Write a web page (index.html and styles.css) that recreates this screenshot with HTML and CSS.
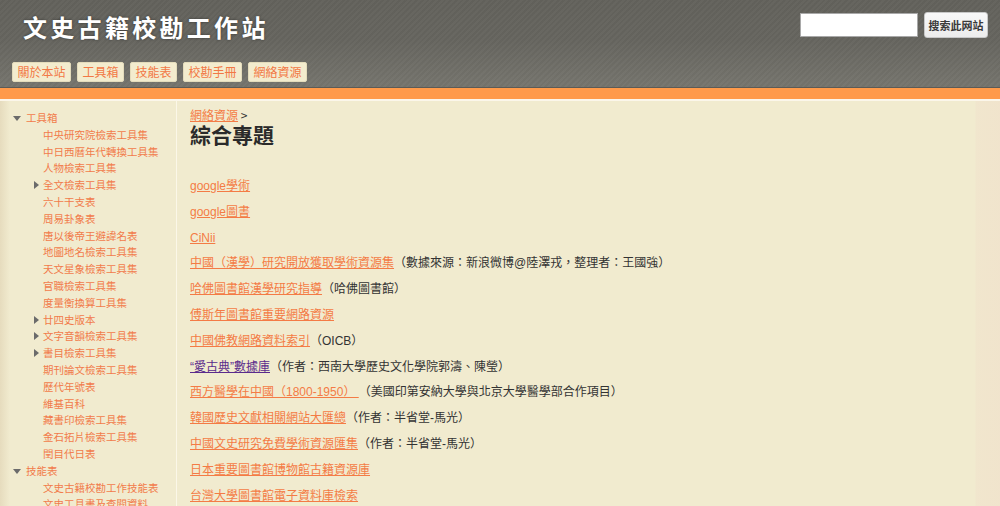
FILE: index.html
```html
<!DOCTYPE html>
<html lang="zh-Hant">
<head>
<meta charset="utf-8">
<title>綜合專題 - 文史古籍校勘工作站</title>
<link rel="stylesheet" href="styles.css">
</head>
<body>
<div class="header">
  <div class="header-top">
    <h1 class="site-title">文史古籍校勘工作站</h1>
    <form class="search">
      <input class="search-input" type="text">
      <button class="search-btn" type="button">搜索此网站</button>
    </form>
  </div>
  <nav class="nav">
    <a class="nav-btn" href="#">關於本站</a>
    <a class="nav-btn" href="#">工具箱</a>
    <a class="nav-btn" href="#">技能表</a>
    <a class="nav-btn" href="#">校勘手冊</a>
    <a class="nav-btn" href="#">網絡資源</a>
  </nav>
</div>
<div class="orange-bar"></div>
<div class="page">
  <aside class="sidebar">
    <ul class="tree">
      <li class="top"><span class="tri-down"></span><a href="#">工具箱</a>
        <ul class="sub">
          <li><a href="#">中央研究院檢索工具集</a></li>
          <li><a href="#">中日西曆年代轉換工具集</a></li>
          <li><a href="#">人物檢索工具集</a></li>
          <li><span class="tri-right"></span><a href="#">全文檢索工具集</a></li>
          <li><a href="#">六十干支表</a></li>
          <li><a href="#">周易卦象表</a></li>
          <li><a href="#">唐以後帝王避諱名表</a></li>
          <li><a href="#">地圖地名檢索工具集</a></li>
          <li><a href="#">天文星象檢索工具集</a></li>
          <li><a href="#">官職檢索工具集</a></li>
          <li><a href="#">度量衡換算工具集</a></li>
          <li><span class="tri-right"></span><a href="#">廿四史版本</a></li>
          <li><span class="tri-right"></span><a href="#">文字音韻檢索工具集</a></li>
          <li><span class="tri-right"></span><a href="#">書目檢索工具集</a></li>
          <li><a href="#">期刊論文檢索工具集</a></li>
          <li><a href="#">歷代年號表</a></li>
          <li><a href="#">維基百科</a></li>
          <li><a href="#">藏書印檢索工具集</a></li>
          <li><a href="#">金石拓片檢索工具集</a></li>
          <li><a href="#">閏目代日表</a></li>
        </ul>
      </li>
      <li class="top"><span class="tri-down"></span><a href="#">技能表</a>
        <ul class="sub">
          <li><a href="#">文史古籍校勘工作技能表</a></li>
          <li><a href="#">文史工具書及查閱資料</a></li>
        </ul>
      </li>
    </ul>
  </aside>
  <main class="main">
    <div class="crumb"><a href="#">網絡資源</a> &gt;</div>
    <h2 class="page-title">綜合專題</h2>
    <div class="list">
      <p class="row"><a href="#">google學術</a></p>
      <p class="row"><a href="#">google圖書</a></p>
      <p class="row"><a href="#">CiNii</a></p>
      <p class="row"><a href="#">中國（漢學）研究開放獲取學術資源集</a>（數據來源：新浪微博@陸澤戎，整理者：王國強）</p>
      <p class="row"><a href="#">哈佛圖書館漢學研究指導</a>（哈佛圖書館）</p>
      <p class="row"><a href="#">傅斯年圖書館重要網路資源</a></p>
      <p class="row"><a href="#">中國佛教網路資料索引</a>（OICB）</p>
      <p class="row"><a class="visited" href="#">“愛古典”數據庫</a>（作者：西南大學歷史文化學院郭濤、陳瑩）</p>
      <p class="row"><a href="#">西方醫學在中國（1800-1950） </a>（美國印第安納大學與北京大學醫學部合作項目）</p>
      <p class="row"><a href="#">韓國歷史文獻相關網站大匯總</a>（作者：半省堂-馬光）</p>
      <p class="row"><a href="#">中國文史研究免費學術資源匯集</a>（作者：半省堂-馬光）</p>
      <p class="row"><a href="#">日本重要圖書館博物館古籍資源庫</a></p>
      <p class="row"><a href="#">台灣大學圖書館電子資料庫檢索</a></p>
    </div>
  </main>
</div>
</body>
</html>
```

FILE: styles.css
```css
html, body {
  margin: 0;
  padding: 0;
}
body {
  font-family: "Liberation Sans", "Noto Sans CJK TC", sans-serif;
  background: #f1ebcf;
  color: #333;
  overflow: hidden;
}
a {
  color: #f47b45;
}

.header {
  height: 87px;
  border-bottom: 1px solid #5c5b56;
  background:
    repeating-linear-gradient(135deg, rgba(255,255,255,0.02) 0 2px, rgba(0,0,0,0.02) 2px 4px),
    linear-gradient(#63625c 0, #66655f 40px, #75746d 84px);
  display: flex;
  flex-direction: column;
}
.header-top {
  display: flex;
  justify-content: space-between;
  align-items: flex-start;
  height: 62px;
}
.site-title {
  margin: 12px 0 0 23px;
  font-family: "Noto Sans CJK TC", sans-serif;
  font-size: 24px;
  line-height: 30px;
  font-weight: bold;
  letter-spacing: 3.3px;
  color: #fff;
  text-shadow: 0 0 3px rgba(0,0,0,0.45);
}
.search {
  display: flex;
  gap: 6px;
  margin: 12px 12px 0 0;
  align-items: center;
}
.search-input {
  box-sizing: border-box;
  width: 118px;
  height: 24px;
  border: 1px solid #a9a9a9;
  background: #fff;
  margin: 0;
  padding: 0;
}
.search-btn {
  box-sizing: border-box;
  width: 64px;
  height: 26px;
  border: 1px solid #c8c8c8;
  border-radius: 3px;
  background: linear-gradient(#f8f8f8, #ececec);
  font-family: "Noto Sans CJK SC", sans-serif;
  font-size: 11px;
  font-weight: bold;
  color: #3a3a3a;
  padding: 0;
}
.nav {
  display: flex;
  gap: 6px;
  padding-left: 12px;
}
.nav-btn {
  box-sizing: border-box;
  height: 20px;
  line-height: 18px;
  padding: 0 4.5px;
  border: 1px solid #e4dcbc;
  border-radius: 2px;
  background: #f3ecce;
  font-family: "Noto Sans CJK TC", sans-serif;
  font-size: 12px;
  color: #f27845;
  text-decoration: none;
}
.orange-bar {
  height: 11px;
  background: #ff9a4a;
  border-bottom: 2px solid #fbf6ea;
}

.page {
  display: flex;
  height: 406px;
  background:
    linear-gradient(90deg, rgba(180,150,110,0.18) 0, rgba(180,150,110,0) 10px),
    linear-gradient(270deg, rgba(240,215,200,0.35) 0, rgba(240,215,200,0.25) 24px, rgba(240,215,200,0) 25px),
    #f1ebcf;
}
.sidebar {
  width: 176px;
  flex: none;
  border-right: 1px solid #fbf7e8;
  padding-top: 9px;
}
.tree, .sub {
  list-style: none;
  margin: 0;
  padding: 0;
}
.tree li {
  font-family: "Noto Sans CJK TC", sans-serif;
  font-size: 10.5px;
  line-height: 16.8px;
  position: relative;
}
.tree a {
  text-decoration: none;
  color: #f27b4b;
}
.top {
  padding-left: 26px;
}
.sub {
  margin-left: 17px;
}
.tri-down {
  position: absolute;
  left: 13px;
  top: 6px;
  width: 0;
  height: 0;
  border-left: 4px solid transparent;
  border-right: 4px solid transparent;
  border-top: 5px solid #6b6b6b;
}
.tri-right {
  position: absolute;
  left: -9px;
  top: 4px;
  width: 0;
  height: 0;
  border-top: 4px solid transparent;
  border-bottom: 4px solid transparent;
  border-left: 5px solid #6b6b6b;
}

.main {
  flex: 1;
  padding: 6px 0 0 13px;
}
.crumb {
  font-family: "Noto Sans CJK TC", sans-serif;
  font-size: 12px;
  line-height: 16px;
  color: #333;
}
.page-title {
  margin: 0 0 28px;
  font-family: "Noto Sans CJK TC", sans-serif;
  font-size: 21px;
  line-height: 23px;
  font-weight: bold;
  color: #2a2a2a;
}
.row {
  margin: 0;
  height: 25.8px;
  line-height: 25.8px;
  font-size: 12px;
  color: #333;
  white-space: nowrap;
}
.row a.visited {
  color: #5a2a8c;
}
```
